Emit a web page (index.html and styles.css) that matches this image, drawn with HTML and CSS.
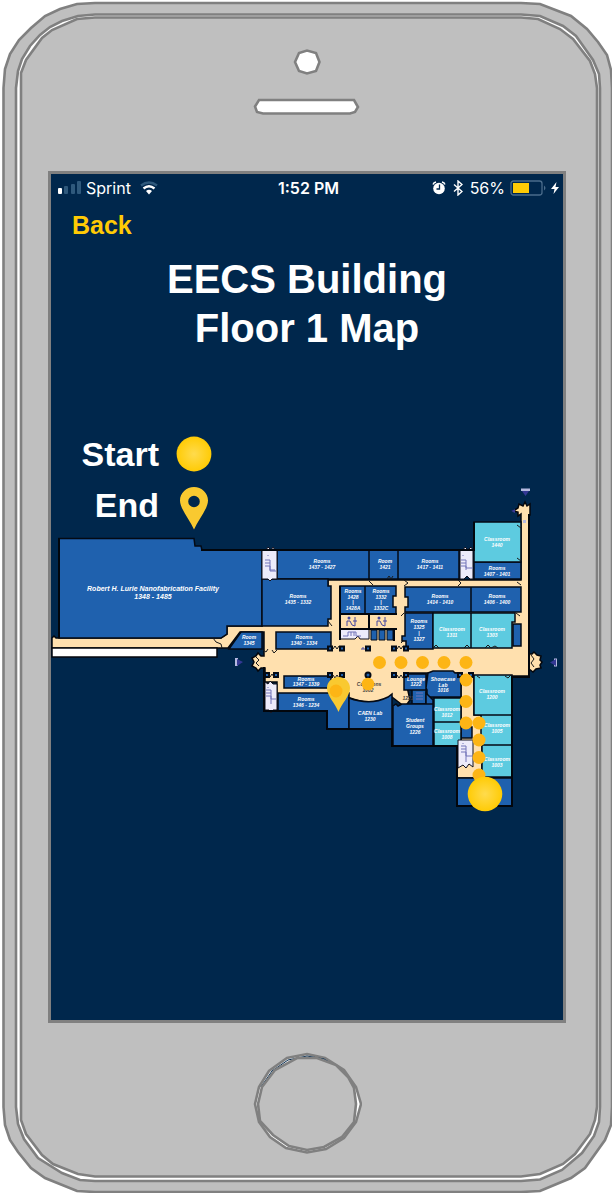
FILE: index.html
```html
<!DOCTYPE html>
<html lang="en">
<head>
<meta charset="utf-8">
<meta name="viewport" content="width=device-width, initial-scale=1">
<title>EECS Building Floor 1 Map</title>
<link rel="stylesheet" href="styles.css">
</head>
<body>
<div class="phone">
  <svg class="bezel" viewBox="0 0 612 1193" preserveAspectRatio="none" aria-hidden="true">
    <path class="shell" d="M3.500 88 5 69 10 54 19 40 31 28 45 16 60 9 77 4 95 3H521L540 4 571 16 587 29 598 42 607 55 611 70 612 88V1107L611 1125 605 1140 585 1168 571 1178 540 1191 521 1192H95L77 1191 45 1178 31 1168 18 1152 10 1140 5 1125 3.500 1107Z"/>
    <path class="gap" d="M16 88 18 71 22 59 30 46 40 35 50 27 62 21 78 16 95 14.500H521L540 16 563 26 576 36 593 60 599 74 600 88V1107L599 1122 594 1136 582 1153 562 1170 540 1179.500 521 1181H95L80 1180 62 1173 38 1158 24 1139 18 1124 16 1107Z"/>
    <path class="shell" d="M21 88V73L26 60 42 38 52 30 77 19 95 17.500H521L538 19 560 29 573 39 590 61 595 74 597 88V1107L595 1120 590 1134 575 1154 563 1164 540 1174 521 1176.500H95L78 1174 53 1164 42 1155 26 1134 21 1120Z"/>
  </svg>

  <div class="phone-top">
    <svg class="speaker" viewBox="253 48 108 68" aria-hidden="true">
      <path class="hole" d="M295 62 299 53 307 50.500 316 53 319.500 62 316 71 307 73.500 299 71Z"/>
      <path class="hole" d="M255 106.500 259 100H354L358 107 355 112 350 113.500H263L257 112Z"/>
    </svg>
  </div>

  <main class="screen">
    <div class="status">
      <div class="status-side">
        <svg class="signal" viewBox="0 0 23 14" aria-hidden="true">
          <rect x="0" y="7" width="4" height="6" rx="1" fill="#fff"/>
          <g fill="#2f597c"><rect x="6" y="5" width="4" height="8" rx="1"/><rect x="13" y="3" width="4" height="10" rx="1"/><rect x="19" y="0" width="4" height="13" rx="1"/></g>
        </svg>
        <span>Sprint</span>
        <svg class="wifi" viewBox="0 0 18 14" aria-hidden="true">
          <path d="M1 4.500Q9-1.500 17 4.500" fill="none" stroke="#2f597c" stroke-width="2.400"/>
          <path d="M3.500 7.500Q9 3 14.500 7.500" fill="none" stroke="#fff" stroke-width="2.400"/>
          <path d="M6 10Q9 7.500 12 10L9 13.500Z" fill="#fff"/>
        </svg>
      </div>
      <strong class="time">1:52 PM</strong>
      <div class="status-side status-right">
        <svg class="alarm" viewBox="0 0 14 14" aria-hidden="true">
          <circle cx="7" cy="7.500" r="5.800" fill="#fff"/>
          <path d="M1 3.500Q1.500 1.500 4 1M13 3.500Q12.500 1.500 10 1" fill="none" stroke="#fff" stroke-width="1.300"/>
          <path d="M7.500 3.500V8H4.500" fill="none" stroke="#00274c" stroke-width="1.300"/>
        </svg>
        <svg class="bluetooth" viewBox="0 0 10 16" aria-hidden="true"><path d="M1 4.500 9 11.500 5 15V1L9 4.500 1 11.500" fill="none" stroke="#fff" stroke-width="1.400"/></svg>
        <span>56%</span>
        <svg class="battery" viewBox="0 0 36 16" aria-hidden="true">
          <rect x="1" y="1" width="31" height="14" rx="2.500" fill="none" stroke="#4a6c8b" stroke-width="1.300"/>
          <rect x="3" y="3" width="16" height="10" fill="#ffcb05"/>
          <path d="M34 5.500Q37 8 34 10.500Z" fill="#4a6c8b"/>
        </svg>
        <svg class="bolt" viewBox="0 0 8 14" aria-hidden="true"><path d="M5.500 1 0 8H3.500L2.500 13 8 6H4.500Z" fill="#fff"/></svg>
      </div>
    </div>

    <nav class="nav"><button class="back" type="button">Back</button></nav>
    <h1 class="title">EECS Building<br>Floor 1 Map</h1>

    <section class="floor">
      <dl class="legend">
        <dt>Start</dt>
        <dd><svg class="legend-icon" viewBox="0 0 36 51" role="img" aria-label="Yellow dot">
          <defs><radialGradient id="sun"><stop offset="0" stop-color="#ffdb4d"/><stop offset="1" stop-color="#ffcb05"/></radialGradient></defs>
          <circle cx="18" cy="25" r="17.400" fill="url(#sun)"/></svg></dd>
        <dt>End</dt>
        <dd><svg class="legend-icon" viewBox="0 0 36 51" role="img" aria-label="Map pin">
          <path fill-rule="evenodd" fill="#f9c930" d="M18 7C10.400 7 4 13 4 20.500C4 29 14 40 18 49.500C22 40 32 29 32 20.500C32 13 25.600 7 18 7ZM18 15.700a5.800 5.800 0 1 1 0 11.600a5.800 5.800 0 1 1 0-11.600Z"/></svg></dd>
      </dl>

      <svg class="map" viewBox="51 480 512 336" role="img" aria-label="Floor 1 map with route">
        <!-- building outline and corridors -->
        <g class="hall">
          <path d="M52 638 54 636 56 638H221L227 634V626H262V586H328V580H521V514L518 516V512L513 511 518 508 519 504 523 506 525 502 527 506 530 504V515H529V654H532L534 652 537 655 541 656 540 660 542 662 540 665 541 668 536 669 533 672 529 669V676H474V715H482V778H457V740H461V673H404L410 700 405 707 392 697Q370 706 350 698L328 695H277V682H265V668H261L258 671 256 668 252 666 254 662 252 658 256 656 258 653 261 656H264V632H240L228 648H52Z"/>
        </g>
        <path class="white" d="M52 648H217V657H52Z"/>

        <!-- office rooms -->
        <g class="room">
          <path d="M59 538.500H194L195 546H201L202 550H262V626H227V634L221 638H59Z"/>
          <path d="M277 550H369V579H277ZM369 550H398V579H369ZM398 550H459V579H398Z"/>
          <path d="M262 579H328V586H331V619H328V626H262Z"/>
          <path d="M241 632H262V649H229ZM276 632H331V649H276Z"/>
          <path d="M284 676H331V688H284ZM278 693H349V729H327V711H278Z"/>
          <path d="M349 698Q370 706 388 697L392 694V729H349Z"/>
          <path d="M340 586H365V614H340ZM365 586H396V596H393V607H396V614H365Z"/>
          <path d="M405 587H471V612H405V607H408V597H405ZM471 587H521V612H471Z"/>
          <path d="M405 613H433V649H406V641H402V636H405ZM513 624H521V646H513Z"/>
          <path d="M474 562H521V579H474Z"/>
          <path d="M404 674H426V690H404ZM412 690H426V704H412ZM428 673 433 671H453L455 673H461V697H427V690L426 688Z"/>
          <path d="M426 693 433 700V704H426ZM393 706 396 704 398 706 402 704H433V746H393Z"/>
          <path d="M461 727H472V738H461ZM457 778H512V806H457Z"/>
        </g>

        <!-- classrooms -->
        <g class="class">
          <path d="M474 522H521V562H474ZM433 613H471V648H433ZM471 613H515V622H512V648H471Z"/>
          <path d="M474 675H512V715H474ZM481 715H512V745H481ZM482 745H512V777H482Z"/>
          <path d="M434 698H461V722H434ZM434 722H461V746H434Z"/>
        </g>

        <!-- stairwells and rest rooms -->
        <g class="stairs">
          <path d="M262 550H266L268 547 271 550 273 547 275 550H277V579H272L270 581 268 579H262Z"/>
          <path d="M460 550H463L465 547 468 550 471 547 473 550V579H470L467 576 464 579H460Z"/>
          <path d="M265 682 268 684 270 681 273 684H277V710H273L271 713 269 710H265Z"/>
          <path d="M340 629H369V639H360L358 636 355 639H340Z"/>
          <path d="M458 740H473V767L469 764 466 768 463 765 458 768Z"/>
        </g>
        <g class="walls">
          <path d="M340 614H397M369 614V629M340 629H397M340 586V640M394 629V641M201 550H474V522M59 538V638M264 667V711H327V729H392V746H457V806H512V677H529V514"/>
        </g>
        <g class="room small"><path d="M371 630H377V640H371ZM379 630H385V640H379ZM387 630H393V640H387Z"/></g>
        <g class="treads">
          <path d="M265 560H270V570H275M265 563H270M265 566H270V571H276M268 555V556M461 560H466V568H473M461 563H466M461 566H466V570M463 555V556M266 690H271V699H276M266 693H271M266 696H271V704M268 687V688M343 636H348V632H356V636H361M351 632V636M354 632V636M461 746H466V756H472M461 749H466M461 752H466V762M463 743V744"/>
          <path d="M416 693H423M416 696H423M416 699H423"/>
        </g>
        <g class="figures">
          <circle cx="349" cy="618" r="1.500"/><path d="M347 626V621H350L352 625 355 626M355 617V626M353 621H357"/>
          <circle cx="379" cy="618" r="1.500"/><path d="M377 626V621H380L382 625 385 626M385 617V626M383 621H387"/>
          <path d="M365 649H361M363 647V649"/>
        </g>

        <!-- columns -->
        <g class="column">
          <path d="M328 646.500h4v4h-4ZM340 646.500h4v4h-4ZM366 646.500h4v4h-4ZM392 646.500h4v4h-4ZM404 646.500h4v4h-4ZM328 673h4v4h-4ZM340 673h4v4h-4ZM392 673h4v4h-4ZM404 673h4v4h-4ZM265 673h4v4h-4ZM274 673h4v4h-4ZM458 673h4v4h-4ZM469 673h4v4h-4Z"/>
          <circle cx="368" cy="675" r="2.500"/>
        </g>
        <g class="doors">
          <path d="M333 649 335 646 337 649 339 646M333 675 335 678 337 675 339 678M397 649 399 646 401 649 403 646M397 675 399 678 401 675 403 678M268 674 270 677 272 674 274 677M263 650 266 652 268 649M272 650 274 653 277 650M213 638 216 642 221 644 222 648M369 581 373 585M387 579 389 576 391 579 393 576M404 580 408 583 404 586M328 621 332 626M458 580 461 583 458 586M517 525 521 528M517 558 521 561M517 582 521 585M516 613 520 616M433 648 436 645 439 648M464 648 467 645 470 648M485 648 488 645 491 648 495 646 498 648M477 676 480 678M505 676 508 678 511 675M404 613 401 616M404 640 401 643M256 657 259 660 256 663 259 666M531 655 534 659 531 663 534 667"/>
        </g>
        <g class="arrow">
          <path class="light" d="M521 488.500H530V491H521ZM235 658V666H238V658ZM557 658.500V666.500H554V658.500ZM523 520H526V523H523Z"/>
          <path d="M522 491H529L525.500 496ZM237 659 243 662 237 666ZM556 659 550 662.500 556 666ZM515 509 511 511 515 513Z"/>
        </g>

        <!-- room labels -->
        <g class="labels">
          <g class="large"><text x="153" y="591">Robert H. Lurie Nanofabrication Facility</text><text x="153" y="599">1348 - 1485</text></g>
          <text x="322" y="563">Rooms</text><text x="322" y="569">1437 - 1427</text>
          <text x="385" y="563">Room</text><text x="385" y="569">1421</text>
          <text x="430" y="563">Rooms</text><text x="430" y="569">1417 - 1411</text>
          <text x="298" y="598">Rooms</text><text x="298" y="604">1435 - 1332</text>
          <text x="353" y="593">Rooms</text><text x="353" y="599">1428</text><text x="353" y="604">|</text><text x="353" y="610">1428A</text>
          <text x="381" y="593">Rooms</text><text x="381" y="599">1332</text><text x="381" y="604">|</text><text x="381" y="610">1332C</text>
          <text x="440" y="598">Rooms</text><text x="440" y="604">1414 - 1410</text>
          <text x="497" y="598">Rooms</text><text x="497" y="604">1406 - 1400</text>
          <text x="497" y="541">Classroom</text><text x="497" y="547">1440</text>
          <text x="497" y="570">Rooms</text><text x="497" y="576">1407 - 1401</text>
          <text x="249" y="639">Room</text><text x="249" y="645">1345</text>
          <text x="304" y="639">Rooms</text><text x="304" y="645">1340 - 1334</text>
          <text x="419" y="623">Rooms</text><text x="419" y="629">1325</text><text x="419" y="635">|</text><text x="419" y="641">1327</text>
          <text x="452" y="631">Classroom</text><text x="452" y="637">1311</text>
          <text x="492" y="631">Classroom</text><text x="492" y="637">1303</text>
          <text x="306" y="681">Rooms</text><text x="306" y="686">1347 - 1339</text>
          <text x="306" y="701">Rooms</text><text x="306" y="707">1346 - 1234</text>
          <text x="370" y="715">CAEN Lab</text><text x="370" y="721">1230</text>
          <text x="415" y="722">Student</text><text x="415" y="728">Groups</text><text x="415" y="734">1226</text>
          <text x="416" y="681">Lounge</text><text x="416" y="686">1222</text>
          <text x="443" y="681">Showcase</text><text x="443" y="687">Lab</text><text x="443" y="692">1016</text>
          <text x="447" y="711">Classroom</text><text x="447" y="717">1012</text>
          <text x="447" y="733">Classroom</text><text x="447" y="739">1008</text>
          <text x="492" y="693">Classroom</text><text x="492" y="699">1200</text>
          <text x="497" y="727">Classroom</text><text x="497" y="733">1005</text>
          <text x="497" y="761">Classroom</text><text x="497" y="767">1003</text>
          <g class="dark"><text x="369" y="686">Commons</text><text x="368" y="692">1002</text><text x="408" y="700">1221</text></g>
        </g>

        <!-- route -->
        <path fill="#f9c930" d="M338.500 677C332 677 327 682 327 688C327 696 335 703 338.500 712C342 703 350 696 350 688C350 682 345 677 338.500 677Z"/>
        <g class="route">
          <circle cx="336" cy="691" r="6.500"/><circle cx="368" cy="684" r="6.300"/>
          <circle cx="379.500" cy="662.500" r="6.500"/><circle cx="401" cy="662.500" r="6.500"/><circle cx="422.500" cy="662.500" r="6.500"/><circle cx="444" cy="662.500" r="6.500"/><circle cx="466" cy="662.500" r="6.500"/>
          <circle cx="466" cy="680" r="6.500"/><circle cx="466" cy="701.500" r="6.500"/><circle cx="466" cy="723" r="6.500"/>
          <circle cx="479" cy="723" r="6.500"/><circle cx="479" cy="740" r="6.500"/><circle cx="479" cy="757.500" r="6.500"/><circle cx="479" cy="775" r="6.500"/>
        </g>
        <circle cx="485" cy="794" r="17.300" fill="url(#sun)"/>
      </svg>
    </section>
  </main>

  <div class="phone-bottom">
    <button class="home" type="button" aria-label="Home">
      <svg viewBox="252 1052 110 102" aria-hidden="true">
        <path class="home-ring" d="M255 1104 259 1087 269 1071 287 1058 307 1054 325 1058 344 1070 356 1087 361 1104 356 1122 344 1138 326 1149 307 1152.500 286 1148 270 1137 259 1122Z"/>
        <path class="home-tint" d="M261 1087 272 1071 288 1060 307 1056 324 1059 342 1070 354 1087"/>
        <path class="home-face" d="M258 1104 262 1087 275 1070 297 1058H317L336 1065 348 1077 354 1088 356 1104 354 1122 342 1137 324 1147 307 1150 289 1146 273 1135 260 1121Z"/>
      </svg>
    </button>
  </div>
</div>
</body>
</html>
```
FILE: styles.css
```css
* { box-sizing: border-box; }

body {
  margin: 0;
  background: #fff;
  font-family: "Liberation Sans", Arial, sans-serif;
}

.phone {
  position: relative;
  display: flex;
  flex-direction: column;
  min-height: 100vh;
  padding: 0 46px 0 48px;
}

.bezel {
  position: absolute;
  inset: 0;
  z-index: -1;
  width: 100%;
  height: 100%;
}

.shell, .gap, .hole, .home-ring, .home-face {
  stroke: #808080;
  stroke-width: 2.6;
}
.shell, .home-face { fill: #bfbfbf; }
.gap, .hole, .home-ring { fill: #fff; }
.home-tint { fill: none; stroke: #00274c; stroke-width: 1; }

.phone-top {
  display: flex;
  justify-content: center;
  height: 171px;
  padding-top: 48px;
}
.speaker { width: 108px; height: 68px; }

.phone-bottom {
  display: flex;
  justify-content: center;
  height: 170px;
  padding-top: 29px;
}
.home {
  width: 110px;
  height: 102px;
  padding: 0;
  border: 0;
  background: none;
}
.home svg { display: block; width: 100%; height: 100%; }

.screen {
  flex: 1;
  border: 3px solid #808080;
  background: #00274c;
  color: #fff;
}

.status {
  display: grid;
  grid-template-columns: 1fr auto 1fr;
  align-items: center;
  height: 28px;
  padding: 0 4px 0 7px;
  font: 400 16px/28px Inter, sans-serif;
}
.status-side { display: flex; align-items: center; gap: 5px; }
.status-right { justify-content: flex-end; }
.time { font-weight: 600; }
.signal { width: 23px; height: 14px; }
.wifi { width: 18px; height: 14px; margin-left: 4px; }
.alarm { width: 14px; height: 14px; }
.bluetooth { width: 10px; height: 16px; margin: 0 2px; }
.battery { width: 36px; height: 16px; }
.bolt { width: 8px; height: 14px; }

.nav { height: 46px; padding-left: 21px; }
.back {
  padding: 0;
  border: 0;
  background: none;
  color: #ffcb05;
  font: bold 25px/46px "Liberation Sans", Arial, sans-serif;
}

.title {
  margin: 7px 0 76px;
  font-size: 40px;
  line-height: 49px;
  text-align: center;
}

.floor {
  display: grid;
  grid-template-rows: 51px 51px auto;
}
.legend {
  grid-area: 1 / 1 / 3 / 2;
  display: grid;
  grid-template-columns: 108px 36px;
  grid-auto-rows: 51px;
  column-gap: 17px;
  align-items: center;
  margin: 0;
  font-size: 34px;
  font-weight: bold;
  text-align: right;
}
.legend dd { display: flex; margin: 0; }
.legend-icon { width: 36px; height: 51px; }

.map {
  grid-area: 2 / 1 / 4 / 2;
  display: block;
  width: 100%;
}
.hall path { fill: #ffe0ae; stroke: #05070c; stroke-width: 1.5; }
.white { fill: #fff; stroke: #05070c; stroke-width: 1.5; }
.room path { fill: #1f61ae; stroke: #040a14; stroke-width: 1.5; }
.room.small path { stroke-width: 1; }
.class path { fill: #5dcbe0; stroke: #040a14; stroke-width: 1.5; }
.stairs path { fill: #edebfa; stroke: #10101c; stroke-width: 1; }
.walls path { fill: none; stroke: #02060c; stroke-width: 2; }
.treads path { fill: none; stroke: #7375b9; stroke-width: 1; }
.figures path { fill: none; stroke: #4547a0; stroke-width: 1; }
.figures circle { fill: #4547a0; }
.column path, .column circle { fill: #1f61ae; stroke: #040a14; stroke-width: 2; }
.doors path { fill: none; stroke: #1a1a1a; stroke-width: 1; }
.arrow path { fill: #343894; }
.arrow .light { fill: #b5b9df; }

.labels {
  fill: #fff;
  font-size: 5px;
  font-style: italic;
  font-weight: bold;
  text-anchor: middle;
}
.labels .large { font-size: 7px; }
.labels .dark { fill: #45413c; }
.route circle { fill: #fdb515; }
```
